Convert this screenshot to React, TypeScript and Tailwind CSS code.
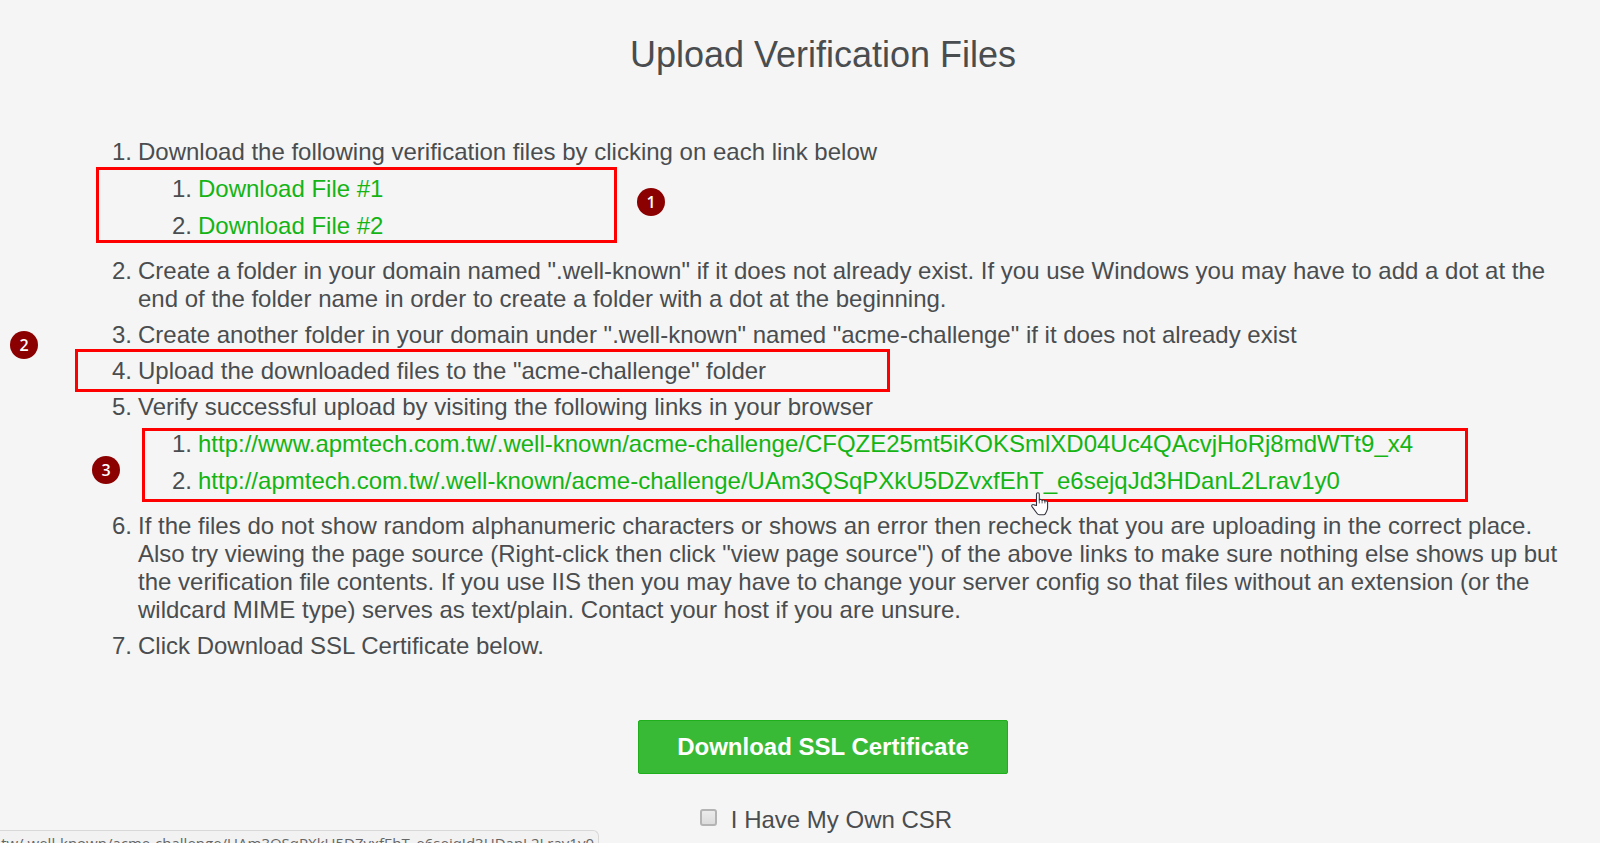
import type { ReactNode } from "react";

function Badge({ n, place }: { n: number; place: string }) {
  return (
    <span
      className={`pointer-events-none absolute flex size-7 items-center justify-center rounded-full bg-[#8b0000] font-['Open_Sans',sans-serif] text-base font-semibold leading-none text-white ${place}`}
    >
      {n}
    </span>
  );
}

function Frame({ place }: { place: string }) {
  return <span aria-hidden="true" className={`pointer-events-none absolute border-3 border-[#ff0000] ${place}`} />;
}

function SubList({ children }: { children: ReactNode }) {
  return <ol className="relative mt-[9px] flex list-none flex-col gap-[9px] pb-[9px]">{children}</ol>;
}

function Row({ n, children, sub = false }: { n: number; children: ReactNode; sub?: boolean }) {
  return (
    <li className={sub ? "flex gap-1.5" : "relative flex gap-1.5"}>
      <span className={sub ? "w-[54px] shrink-0 text-right" : "w-5 shrink-0 text-right"}>{n}.</span>
      <div className="min-w-0 flex-1">{children}</div>
    </li>
  );
}

const host = "apmtech.com.tw/.well-known/acme-challenge/";
const files = [
  `http://www.${host}CFQZE25mt5iKOKSmlXD04Uc4QAcvjHoRj8mdWTt9_x4`,
  `http://${host}UAm3QSqPXkU5DZvxfEhT_e6sejqJd3HDanL2Lrav1y0`,
];

function Hand() {
  return (
    <svg
      aria-hidden="true"
      viewBox="0 0 18 24"
      className="pointer-events-none absolute left-[893px] top-[62px] h-6 w-[18px]"
      fill="#fff"
      stroke="#33333f"
      strokeWidth="1.1"
      strokeLinejoin="round"
      strokeLinecap="round"
    >
      <path d="M5.500 13.500V2.200C5.500.3 8.300.3 8.300 2.200V8c.3-.9 2.600-.8 2.800.5.500-.8 2.500-.6 2.800.7.600-.7 2.700-.4 2.700 1.200v5.100c0 2-.6 3-1.200 4.300l-.9 1.700c-.4.900-1 1.200-1.800 1.200H8.300c-1 0-1.600-.3-2.200-1.200L1 14.600c-.9-1.400.7-2.700 2-1.700z" />
      <path d="M8.300 8v3M11.100 8.500V11M13.900 9.200V11" strokeWidth=".8" />
    </svg>
  );
}

export default function App() {
  return (
    <div className="relative h-screen overflow-hidden bg-[#f5f5f5] font-['Liberation_Sans',Arial,sans-serif] text-2xl leading-7 text-[#4a4d4f]">
      <main className="flex flex-col items-center pt-8">
        <h1 className="ml-[46px] text-4xl leading-[46px]">Upload Verification Files</h1>

        <ol className="mt-[60px] flex w-full list-none flex-col gap-2 pl-28 pr-8">
          <Row n={1}>
            Download the following verification files by clicking on each link below
            <SubList>
              {[1, 2].map((n) => (
                <Row key={n} n={n} sub>
                  <a href={`#file-${n}`} className="text-[#14b414]">
                    Download File #{n}
                  </a>
                </Row>
              ))}
              <Frame place="-left-[42px] -top-2 h-[76px] w-[521px]" />
              <Badge n={1} place="left-[499px] top-[13px]" />
            </SubList>
          </Row>
          <Row n={2}>
            Create a folder in your domain named ".well-known" if it does not already exist. If you use Windows you may
            have to add a dot at the end of the folder name in order to create a folder with a dot at the beginning.
          </Row>
          <Row n={3}>
            Create another folder in your domain under ".well-known" named "acme-challenge" if it does not already exist
          </Row>
          <Row n={4}>
            Upload the downloaded files to the "acme-challenge" folder
            <Frame place="-left-[37px] -top-2 h-[43px] w-[815px]" />
            <Badge n={2} place="-left-[102px] -top-[26px]" />
          </Row>
          <Row n={5}>
            Verify successful upload by visiting the following links in your browser
            <SubList>
              {files.map((url, i) => (
                <Row key={url} n={i + 1} sub>
                  <a href={url} className="text-[#14b414]">
                    {url}
                  </a>
                </Row>
              ))}
              <Frame place="left-1 -top-0.5 h-[74px] w-[1326px]" />
              <Badge n={3} place="-left-[46px] top-[26px]" />
              <Hand />
            </SubList>
          </Row>
          <Row n={6}>
            If the files do not show random alphanumeric characters or shows an error then recheck that you are uploading
            in the correct place. Also try viewing the page source (Right-click then click "view page source") of the
            above links to make sure nothing else shows up but the verification file contents. If you use IIS then you
            may have to change your server config so that files without an extension (or the wildcard MIME type) serves
            as text/plain. Contact your host if you are unsure.
          </Row>
          <Row n={7}>Click Download SSL Certificate below.</Row>
        </ol>

        <button
          type="button"
          className="ml-[46px] mt-[60px] h-[54px] rounded-xs border border-[#1fae1c] bg-[#39ba36] px-[38px] font-bold text-white"
        >
          Download SSL Certificate
        </button>

        <label className="ml-[52px] mt-8 flex items-center gap-[14px]">
          <input
            type="checkbox"
            className="-mt-1.5 size-[17px] appearance-none rounded-[3px] border-2 border-[#b4b4b4] bg-linear-to-b from-[#ececec] to-[#dcdcdc]"
          />
          I Have My Own CSR
        </label>
      </main>

      <div className="absolute bottom-0 left-0 flex h-[13px] w-[599px] justify-end overflow-hidden rounded-tr-md border-r border-t border-[#d8d8d8] bg-[#f2f2f2] pr-1 font-['Open_Sans',sans-serif] text-[15px] leading-6 text-[#666]">
        <span className="whitespace-nowrap">{files[1]}</span>
      </div>
    </div>
  );
}
